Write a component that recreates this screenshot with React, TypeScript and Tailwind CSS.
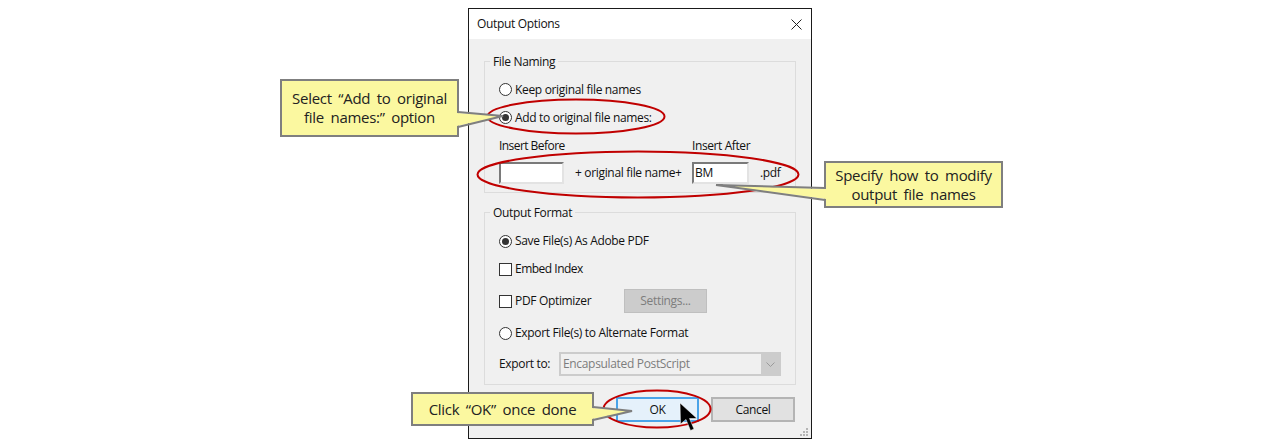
function Radio({ checked }: { checked?: boolean }) {
  return (
    <span className="flex h-[13px] w-[13px] shrink-0 items-center justify-center rounded-full border border-[#333333] bg-white">
      {checked && <span className="h-[7px] w-[7px] rounded-full bg-[#333333]" />}
    </span>
  );
}

function Checkbox() {
  return <span className="h-[13px] w-[13px] shrink-0 border border-[#333333] bg-white" />;
}

function Callout({ className, children }: { className: string; children: React.ReactNode }) {
  return (
    <div
      className={`absolute flex items-center justify-center border-2 border-[#7f7f7f] bg-[#fbf8a0] text-center text-[15px] leading-[19px] tracking-[-0.3px] text-[#222222] [word-spacing:3px] ${className}`}
    >
      {children}
    </div>
  );
}

export default function App() {
  return (
    <div className="relative h-[447px] w-full overflow-hidden bg-white font-['Open_Sans',sans-serif]">
      {/* Dialog */}
      <div className="relative top-[8px] mx-auto h-[431px] w-[344px] border border-[#1a1a1a] bg-[#f0f0f0] text-[12px] tracking-[-0.33px] text-[#111111]">
        <div className="flex h-[30px] items-center justify-between bg-white pl-[8px] pr-[10px]">
          <span>Output Options</span>
          <svg width="11" height="11" viewBox="0 0 11 11" className="mr-[-1px]">
            <path d="M0.5 0.5L10.5 10.5M10.5 0.5L0.5 10.5" stroke="#222222" strokeWidth="1" fill="none" />
          </svg>
        </div>

        <div className="flex flex-col px-[15px] pt-[14px]">
          <fieldset className="border border-[#dcdcdc] pb-[8px] pl-[14px] pr-[14px]">
            <legend className="ml-[-9px] h-4 px-[3px] pt-[1px] leading-4">File Naming</legend>
            <div className="mt-[6px] flex h-[28px] items-center gap-[3px]">
              <Radio />
              <span className="pt-[2px]">Keep original file names</span>
            </div>
            <div className="flex h-[28px] items-center gap-[3px]">
              <Radio checked />
              <span className="pt-[2px]">Add to original file names:</span>
            </div>
            <div className="flex h-[28px] items-center pt-[2px]">
              <span className="w-[193px] tracking-[-0.55px]">Insert Before</span>
              <span className="tracking-[-0.4px]">Insert After</span>
            </div>
            <div className="mt-[3px] flex h-[22px] items-center">
              <span className="h-[22px] w-[65px] border-2 border-b-[#e3e3e3] border-l-[#7a7a7a] border-r-[#e3e3e3] border-t-[#7a7a7a] bg-white" />
              <span className="ml-[11px] w-[117px]">+ original file name+</span>
              <span className="h-[22px] w-[57px] border-2 border-b-[#e3e3e3] border-l-[#7a7a7a] border-r-[#e3e3e3] border-t-[#7a7a7a] bg-white pl-[1px] leading-[17px]">
                BM
              </span>
              <span className="ml-[11px]">.pdf</span>
            </div>
          </fieldset>

          <fieldset className="mt-[11px] border border-[#dcdcdc] pb-[8px] pl-[14px] pr-[14px]">
            <legend className="ml-[-9px] h-4 px-[3px] pt-[1px] leading-4">Output Format</legend>
            <div className="mt-[7px] flex h-[28px] items-center gap-[3px]">
              <Radio checked />
              <span>Save File(s) As Adobe PDF</span>
            </div>
            <div className="flex h-[28px] items-center gap-[3px]">
              <Checkbox />
              <span className="tracking-[-0.5px]">Embed Index</span>
            </div>
            <div className="mt-[4px] flex h-[28px] items-center gap-[3px]">
              <Checkbox />
              <span className="w-[106px]">PDF Optimizer</span>
              <span className="flex h-[24px] w-[83px] items-center justify-center border border-[#bfbfbf] bg-[#cccccc] text-[#7d7d7d]">
                Settings...
              </span>
            </div>
            <div className="mt-[4px] flex h-[28px] items-center gap-[3px]">
              <Radio />
              <span>Export File(s) to Alternate Format</span>
            </div>
            <div className="mt-[5px] flex h-[24px] items-center">
              <span className="w-[60px]">Export to:</span>
              <div className="flex h-[24px] w-[222px] items-stretch border-2 border-[#cccccc] bg-[#cccccc]">
                <span className="flex w-[200px] items-center bg-[#f0f0f0] pl-[2px] text-[#7d7d7d]">Encapsulated PostScript</span>
                <span className="flex flex-1 items-center justify-center">
                  <svg width="9" height="5" viewBox="0 0 9 5">
                    <path d="M0.5 0.5L4.5 4.5L8.5 0.5" stroke="#9a9a9a" fill="none" />
                  </svg>
                </span>
              </div>
            </div>
          </fieldset>

          <div className="mt-[12px] flex justify-end gap-[12px] pr-[1px]">
            <span className="flex h-[25px] w-[83px] items-center justify-center border-2 border-[#4aa3e8] bg-[#e5f1fb]">OK</span>
            <span className="flex h-[25px] w-[84px] items-center justify-center border-2 border-[#b4b4b4] bg-[#e1e1e1]">Cancel</span>
          </div>
        </div>

        {/* resize grip */}
        <svg width="9" height="9" viewBox="0 0 9 9" className="absolute bottom-[1px] right-[2px]">
          <path d="M6 0h2v2H6zM3 3h2v2H3zM6 3h2v2H6zM0 6h2v2H0zM3 6h2v2H3zM6 6h2v2H6z" fill="#b5b5b5" />
        </svg>
      </div>

      {/* red highlights */}
      <svg width="1280" height="447" viewBox="0 0 1280 447" className="pointer-events-none absolute left-0 top-0">
        <ellipse cx="576" cy="116.5" rx="88.5" ry="17" fill="none" stroke="#c00000" strokeWidth="2" />
        <ellipse cx="638" cy="174.5" rx="160.5" ry="23" fill="none" stroke="#c00000" strokeWidth="2" />
        <ellipse cx="657" cy="409" rx="53.5" ry="18.5" fill="none" stroke="#c00000" strokeWidth="2" />
      </svg>

      <Callout className="left-[280px] top-[79px] h-[58px] w-[179px]">
        <span>
          Select “Add to original
          <br />
          file names:” option
        </span>
      </Callout>
      <Callout className="left-[824px] top-[161px] h-[47px] w-[179px]">
        <span>
          Specify how to modify
          <br />
          output file names
        </span>
      </Callout>
      <Callout className="left-[411px] top-[392px] h-[34px] w-[183px]">Click “OK” once done</Callout>

      {/* callout pointers, drawn over the box borders so the tail opens into the box */}
      <svg width="1280" height="447" viewBox="0 0 1280 447" className="pointer-events-none absolute left-0 top-0">
        <path d="M457 113L503 116L457 126Z" fill="#fbf8a0" />
        <path d="M458 112L503 116L458 127" fill="none" stroke="#7f7f7f" strokeWidth="2" />
        <path d="M826 189L716 185L826 199Z" fill="#fbf8a0" />
        <path d="M825 188L716 185L825 200" fill="none" stroke="#7f7f7f" strokeWidth="2" />
        <path d="M592 408L632 411L592 419Z" fill="#fbf8a0" />
        <path d="M593 407L632 411L593 420" fill="none" stroke="#7f7f7f" strokeWidth="2" />
      </svg>

      {/* mouse pointer */}
      <svg width="20" height="30" viewBox="0 0 20 30" className="absolute left-[679px] top-[402px]">
        <path d="M1 1L1.5 22L7 17.5L11.5 28.5L15 27L10.5 16.5L18 16.5Z" fill="#000000" stroke="#ffffff" strokeWidth="0.5" />
      </svg>
    </div>
  );
}
